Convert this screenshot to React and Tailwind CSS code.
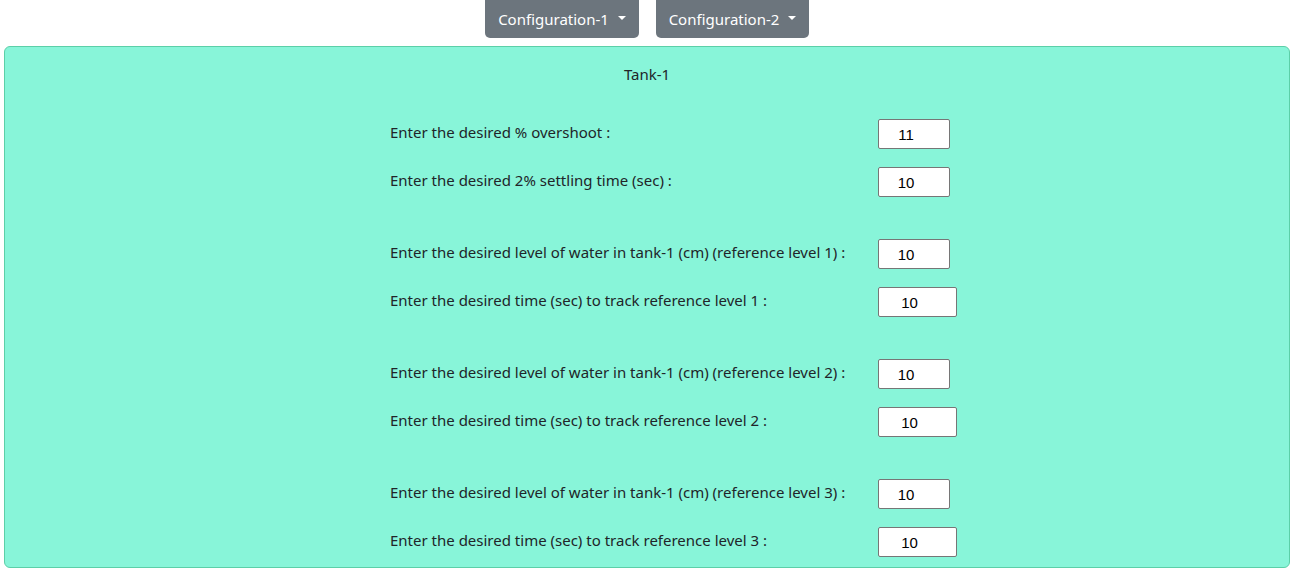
import React from 'react'

const groups = [
  [
    { label: 'Enter the desired % overshoot :', value: '11', wide: false },
    { label: 'Enter the desired 2% settling time (sec) :', value: '10', wide: false },
  ],
  [
    { label: 'Enter the desired level of water in tank-1 (cm) (reference level 1) :', value: '10', wide: false },
    { label: 'Enter the desired time (sec) to track reference level 1 :', value: '10', wide: true },
  ],
  [
    { label: 'Enter the desired level of water in tank-1 (cm) (reference level 2) :', value: '10', wide: false },
    { label: 'Enter the desired time (sec) to track reference level 2 :', value: '10', wide: true },
  ],
  [
    { label: 'Enter the desired level of water in tank-1 (cm) (reference level 3) :', value: '10', wide: false },
    { label: 'Enter the desired time (sec) to track reference level 3 :', value: '10', wide: true },
  ],
]

const Caret = () => (
  <span className='ml-[9px] inline-block w-0 h-0 border-l-[4px] border-r-[4px] border-t-[4px] border-l-transparent border-r-transparent border-t-white translate-y-[-1px]' />
)

export default function App() {
  return (
    <div className='w-[1294px] h-[572px] bg-white overflow-hidden' style={{ fontFamily: '"Noto Sans", "Open Sans", sans-serif' }}>
      <div className='flex justify-center gap-[17px]'>
        <button className='h-[38px] w-[154px] flex items-center justify-center bg-[#6c757d] text-white text-[15px] rounded-b-[5px]'>
          Configuration-1 <Caret />
        </button>
        <button className='h-[38px] w-[153px] flex items-center justify-center bg-[#6c757d] text-white text-[15px] rounded-b-[5px]'>
          Configuration-2 <Caret />
        </button>
      </div>
      <div className='mx-[4px] mt-[8px] h-[522px] bg-[#88f5d9] border border-[#5ccfa8] rounded-[6px] text-[#212529] text-[15px]'>
        <div className='text-center pt-[15px] leading-[24px]'>Tank-1</div>
        <div className='ml-[385px] mt-[33px] flex flex-col gap-[42px]'>
          {groups.map((g, i) => (
            <div key={i} className='flex flex-col gap-[18px]'>
              {g.map((r, j) => (
                <div key={j} className='flex items-center'>
                  <span className='w-[488px] leading-[30px] -translate-y-[2px]'>{r.label}</span>
                  <input
                    readOnly
                    value={r.value}
                    className={`h-[30px] ${r.wide ? 'w-[79px]' : 'w-[72px]'} bg-white border border-[#767676] rounded-[2px] text-center pr-[16px] text-[15px] text-black outline-none`}
                    style={{ fontFamily: '"Liberation Sans", Arial, sans-serif' }}
                  />
                </div>
              ))}
            </div>
          ))}
        </div>
      </div>
    </div>
  )
}
